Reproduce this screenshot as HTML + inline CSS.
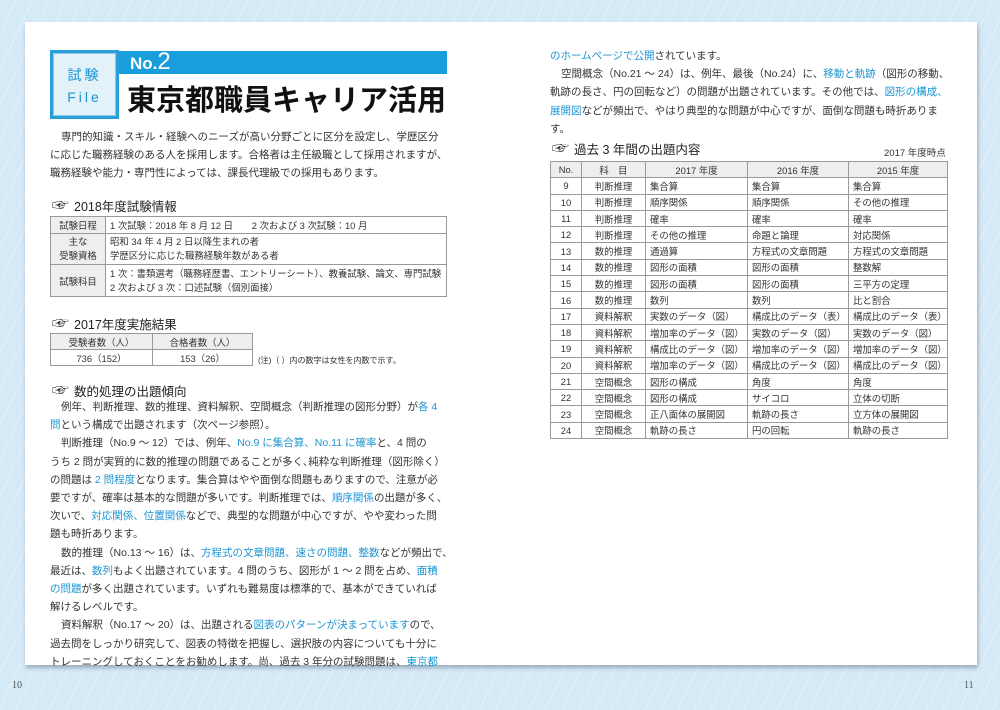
<!DOCTYPE html>
<html><head><meta charset="utf-8"><style>
*{margin:0;padding:0;box-sizing:border-box}
body{width:1000px;height:710px;overflow:hidden;background:#d5eaf7;font-family:"Liberation Sans","Noto Sans CJK JP",sans-serif;color:#333;position:relative;
background-image:repeating-linear-gradient(115deg,rgba(255,255,255,0) 0 14px,rgba(255,255,255,.35) 14px 15px);}
.panel{position:absolute;left:25px;top:22px;width:952px;height:643px;background:#fff;box-shadow:1px 3px 4px rgba(80,100,120,.45)}
.abs{position:absolute}
.b{color:#1b95d2}
p.t{font-size:10.5px;line-height:18.2px;letter-spacing:0;text-indent:11px;white-space:nowrap}
.h{font-size:12.5px;display:flex;align-items:center;gap:5px;color:#222}
.hand{font-size:17px;color:#222;line-height:14px}
table{border-collapse:collapse;font-size:9.4px;color:#333;table-layout:fixed}
td{border:1px solid #999;padding:0 4px;white-space:nowrap;overflow:hidden}
.g{background:#eee;text-align:center}
.c{text-align:center}
</style></head><body>
<div class="panel"></div>
<div class="abs" style="left:50px;top:50px;width:69px;height:69px;background:#2a9ed8;padding:3px">
 <div style="width:100%;height:100%;background:#e3f1f9;border:1px solid #8cc8e8;color:#1b95d2;text-align:center;font-size:14px;line-height:22px;padding-top:10px;letter-spacing:3px">試験<br>File</div>
</div>
<div class="abs" style="left:119px;top:51px;width:328px;height:23px;background:#1a9ddb"></div>
<div class="abs" style="left:130px;top:50px;color:#fff;font-size:17px;font-weight:bold;line-height:24px">No.<span style="font-size:24px;font-weight:normal">2</span></div>
<div class="abs" style="left:127px;top:82px;font-size:29px;line-height:38px;color:#111;font-weight:bold">東京都職員キャリア活用</div>

<div class="abs" style="left:50px;top:128px">
<p class="t">専門的知識・スキル・経験へのニーズが高い分野ごとに区分を設定し、学歴区分</p>
<p class="t" style="text-indent:0">に応じた職務経験のある人を採用します。合格者は主任級職として採用されますが、</p>
<p class="t" style="text-indent:0">職務経験や能力・専門性によっては、課長代理級での採用もあります。</p>
</div>

<div class="abs h" style="left:52px;top:196px"><span class="hand">☞</span>2018年度試験情報</div>
<table class="abs" style="left:50px;top:216px;width:397px">
<tr style="height:17px"><td class="g" style="width:55px">試験日程</td><td>1 次試験：2018 年 8 月 12 日　　2 次および 3 次試験：10 月</td></tr>
<tr style="height:31px"><td class="g" style="line-height:14px">主な<br>受験資格</td><td style="line-height:14px">昭和 34 年 4 月 2 日以降生まれの者<br>学歴区分に応じた職務経験年数がある者</td></tr>
<tr style="height:32px"><td class="g">試験科目</td><td style="line-height:14px">1 次：書類選考（職務経歴書、エントリーシート）、教養試験、論文、専門試験<br>2 次および 3 次：口述試験（個別面接）</td></tr>
</table>

<div class="abs h" style="left:52px;top:314px"><span class="hand">☞</span>2017年度実施結果</div>
<table class="abs" style="left:50px;top:333px;width:203px">
<tr style="height:16px"><td class="g" style="width:102px">受験者数（人）</td><td class="g">合格者数（人）</td></tr>
<tr style="height:16px"><td class="c">736（152）</td><td class="c">153（26）</td></tr>
</table>
<div class="abs" style="left:258px;top:355px;font-size:8px">(注)（ ）内の数字は女性を内数で示す。</div>

<div class="abs h" style="left:52px;top:381px"><span class="hand">☞</span>数的処理の出題傾向</div>
<div class="abs" style="left:50px;top:398px">
<p class="t">例年、判断推理、数的推理、資料解釈、空間概念（判断推理の図形分野）が<span class="b">各 4</span></p>
<p class="t" style="text-indent:0"><span class="b">問</span>という構成で出題されます（次ページ参照）。</p>
<p class="t">判断推理（No.9 ～ 12）では、例年、<span class="b">No.9 に集合算、No.11 に確率</span>と、4 問の</p>
<p class="t" style="text-indent:0">うち 2 問が実質的に数的推理の問題であることが多く､純粋な判断推理（図形除く）</p>
<p class="t" style="text-indent:0">の問題は <span class="b">2 問程度</span>となります。集合算はやや面倒な問題もありますので、注意が必</p>
<p class="t" style="text-indent:0">要ですが、確率は基本的な問題が多いです。判断推理では、<span class="b">順序関係</span>の出題が多く、</p>
<p class="t" style="text-indent:0">次いで、<span class="b">対応関係、位置関係</span>などで、典型的な問題が中心ですが、やや変わった問</p>
<p class="t" style="text-indent:0">題も時折あります。</p>
<p class="t">数的推理（No.13 ～ 16）は、<span class="b">方程式の文章問題、速さの問題、整数</span>などが頻出で、</p>
<p class="t" style="text-indent:0">最近は、<span class="b">数列</span>もよく出題されています。4 問のうち、図形が 1 ～ 2 問を占め、<span class="b">面積</span></p>
<p class="t" style="text-indent:0"><span class="b">の問題</span>が多く出題されています。いずれも難易度は標準的で、基本ができていれば</p>
<p class="t" style="text-indent:0">解けるレベルです。</p>
<p class="t">資料解釈（No.17 ～ 20）は、出題される<span class="b">図表のパターンが決まっています</span>ので、</p>
<p class="t" style="text-indent:0">過去問をしっかり研究して、図表の特徴を把握し、選択肢の内容についても十分に</p>
<p class="t" style="text-indent:0">トレーニングしておくことをお勧めします。尚、過去 3 年分の試験問題は、<span class="b">東京都</span></p>
</div>

<div class="abs" style="left:550px;top:47px">
<p class="t" style="text-indent:0"><span class="b">のホームページで公開</span>されています。</p>
<p class="t">空間概念（No.21 ～ 24）は、例年、最後（No.24）に、<span class="b">移動と軌跡</span>（図形の移動、</p>
<p class="t" style="text-indent:0">軌跡の長さ、円の回転など）の問題が出題されています。その他では、<span class="b">図形の構成、</span></p>
<p class="t" style="text-indent:0"><span class="b">展開図</span>などが頻出で、やはり典型的な問題が中心ですが、面倒な問題も時折ありま</p>
<p class="t" style="text-indent:0">す。</p>
</div>
<div class="abs h" style="left:552px;top:139px"><span class="hand">☞</span>過去 3 年間の出題内容</div>
<div class="abs" style="left:884px;top:145px;font-size:9.5px">2017 年度時点</div>
<table class="abs" style="left:550px;top:161px;width:398px">
<tr style="height:16.3px" class="g"><td style="width:31px">No.</td><td style="width:64px">科　目</td><td style="width:102px">2017 年度</td><td style="width:101px">2016 年度</td><td>2015 年度</td></tr>
<tr style="height:16.3px"><td class="c">9</td><td class="c">判断推理</td><td>集合算</td><td>集合算</td><td>集合算</td></tr>
<tr style="height:16.3px"><td class="c">10</td><td class="c">判断推理</td><td>順序関係</td><td>順序関係</td><td>その他の推理</td></tr>
<tr style="height:16.3px"><td class="c">11</td><td class="c">判断推理</td><td>確率</td><td>確率</td><td>確率</td></tr>
<tr style="height:16.3px"><td class="c">12</td><td class="c">判断推理</td><td>その他の推理</td><td>命題と論理</td><td>対応関係</td></tr>
<tr style="height:16.3px"><td class="c">13</td><td class="c">数的推理</td><td>通過算</td><td>方程式の文章問題</td><td>方程式の文章問題</td></tr>
<tr style="height:16.3px"><td class="c">14</td><td class="c">数的推理</td><td>図形の面積</td><td>図形の面積</td><td>整数解</td></tr>
<tr style="height:16.3px"><td class="c">15</td><td class="c">数的推理</td><td>図形の面積</td><td>図形の面積</td><td>三平方の定理</td></tr>
<tr style="height:16.3px"><td class="c">16</td><td class="c">数的推理</td><td>数列</td><td>数列</td><td>比と割合</td></tr>
<tr style="height:16.3px"><td class="c">17</td><td class="c">資料解釈</td><td>実数のデータ（図）</td><td>構成比のデータ（表）</td><td>構成比のデータ（表）</td></tr>
<tr style="height:16.3px"><td class="c">18</td><td class="c">資料解釈</td><td>増加率のデータ（図）</td><td>実数のデータ（図）</td><td>実数のデータ（図）</td></tr>
<tr style="height:16.3px"><td class="c">19</td><td class="c">資料解釈</td><td>構成比のデータ（図）</td><td>増加率のデータ（図）</td><td>増加率のデータ（図）</td></tr>
<tr style="height:16.3px"><td class="c">20</td><td class="c">資料解釈</td><td>増加率のデータ（図）</td><td>構成比のデータ（図）</td><td>構成比のデータ（図）</td></tr>
<tr style="height:16.3px"><td class="c">21</td><td class="c">空間概念</td><td>図形の構成</td><td>角度</td><td>角度</td></tr>
<tr style="height:16.3px"><td class="c">22</td><td class="c">空間概念</td><td>図形の構成</td><td>サイコロ</td><td>立体の切断</td></tr>
<tr style="height:16.3px"><td class="c">23</td><td class="c">空間概念</td><td>正八面体の展開図</td><td>軌跡の長さ</td><td>立方体の展開図</td></tr>
<tr style="height:16.3px"><td class="c">24</td><td class="c">空間概念</td><td>軌跡の長さ</td><td>円の回転</td><td>軌跡の長さ</td></tr>
</table>

<div class="abs" style="left:12px;top:680px;font-size:10px;color:#555;font-family:'Liberation Serif',serif">10</div>
<div class="abs" style="left:964px;top:680px;font-size:10px;color:#555;font-family:'Liberation Serif',serif">11</div>
</body></html>
